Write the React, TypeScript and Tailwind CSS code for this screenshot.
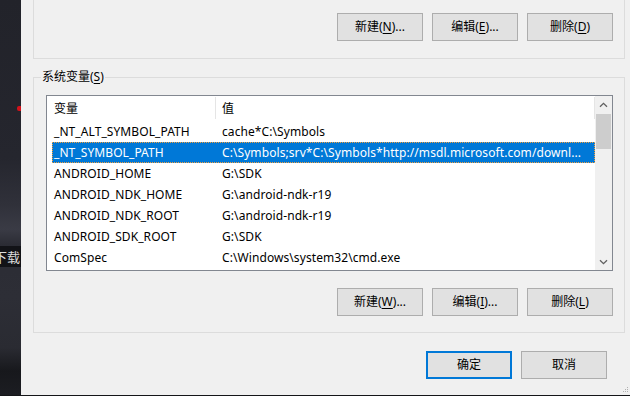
import React from "react";

const VARS: [string, string][] = [
  ["_NT_ALT_SYMBOL_PATH", "cache*C:\\Symbols"],
  ["_NT_SYMBOL_PATH", "C:\\Symbols;srv*C:\\Symbols*http://msdl.microsoft.com/downl..."],
  ["ANDROID_HOME", "G:\\SDK"],
  ["ANDROID_NDK_HOME", "G:\\android-ndk-r19"],
  ["ANDROID_NDK_ROOT", "G:\\android-ndk-r19"],
  ["ANDROID_SDK_ROOT", "G:\\SDK"],
  ["ComSpec", "C:\\Windows\\system32\\cmd.exe"],
];

function Btn({
  label,
  hotkey,
  tail = "",
  primary = false,
}: {
  label: string;
  hotkey?: string;
  tail?: string;
  primary?: boolean;
}) {
  return (
    <button
      className={
        primary
          ? "w-[86px] h-[28px] bg-[#e1e1e1] border-2 border-[#0078d7] flex items-center justify-center text-[12px] leading-none text-black"
          : "w-[86px] h-[28px] bg-[#e1e1e1] border border-[#adadad] flex items-center justify-center text-[12px] leading-none text-black"
      }
    >
      {label}
      {hotkey && (
        <>
          (<span className="underline underline-offset-[2px]">{hotkey}</span>)
        </>
      )}
      {tail}
    </button>
  );
}

function Chevron({ down = false }: { down?: boolean }) {
  return (
    <svg width="9" height="6" viewBox="0 0 9 6">
      <path
        d={down ? "M1 1.2 L4.5 4.7 L8 1.2" : "M1 4.8 L4.5 1.3 L8 4.8"}
        fill="none"
        stroke="#606060"
        strokeWidth="1.3"
      />
    </svg>
  );
}

function Strip() {
  return (
    <div className="w-[21px] shrink-0 flex flex-col overflow-hidden bg-[linear-gradient(180deg,#22232a_0%,#25262e_40%,#30313a_52%,#3a3b45_58%,#2b2c34_62%,#2d2e36_75%,#2a2b32_88%,#17181c_94%,#1c1d22_100%)]">
      <div className="h-[106px]" />
      <div className="flex justify-end">
        <div className="w-[4px] h-[5px] bg-[#d3121b] rounded-l-[2px]" />
      </div>
      <div className="h-[135px]" />
      <div className="h-[21px] bg-[#121317] flex items-center justify-end pr-[1px] overflow-hidden">
        <span className="whitespace-nowrap text-[13px] leading-none text-[#dcdcdc] font-['Noto_Sans_CJK_SC',sans-serif]">
          下载
        </span>
      </div>
    </div>
  );
}

function VarList() {
  return (
    <div className="ml-[12px] mt-[11px] w-[567px] h-[176px] border border-[#828790] bg-white flex">
      <div className="flex-1 flex flex-col tracking-[0.08px]">
        <div className="h-[25px] flex items-stretch">
          <div className="w-[169px] pl-[7px] pt-[2px] flex items-center border-r border-[#e5e5e5] mt-[1px] mb-[2px]">变量</div>
          <div className="flex-1 pl-[6px] pt-[2px] flex items-center border-r border-[#e5e5e5] mt-[1px] mb-[2px]">值</div>
        </div>
        {VARS.map(([name, value], i) => (
          <div
            key={name}
            className={
              i === 1
                ? "ml-[5px] h-[21px] flex items-center border border-dotted border-[#f0a040] bg-[#0078d7] text-white"
                : "ml-[5px] h-[21px] flex items-center border border-transparent"
            }
          >
            <div className="w-[168px] pl-[1px] whitespace-nowrap">{name}</div>
            <div className="flex-1 pl-[1px] whitespace-nowrap overflow-hidden">{value}</div>
          </div>
        ))}
      </div>
      <div className="w-[17px] bg-[#f0f0f0] flex flex-col">
        <div className="h-[17px] flex items-center justify-center">
          <Chevron />
        </div>
        <div className="mx-[1px] mt-[1px] h-[35px] bg-[#cdcdcd]" />
        <div className="flex-1" />
        <div className="h-[17px] flex items-center justify-center">
          <Chevron down />
        </div>
      </div>
    </div>
  );
}

export default function App() {
  return (
    <div className="w-[630px] h-[396px] flex flex-col bg-[#141518] overflow-hidden text-[12px] text-black font-['Noto_Sans','Noto_Sans_CJK_SC',sans-serif]">
      <div className="h-[395px] flex">
        <Strip />
        <div className="relative flex-1 bg-[#f0f0f0] flex flex-col pl-[12px] pr-[5px]">
          <div className="h-[59px] border-x border-b border-[#dcdcdc] flex justify-end items-start pt-[13px] pr-[11px] gap-[9px]">
            <Btn label="新建" hotkey="N" tail="..." />
            <Btn label="编辑" hotkey="E" tail="..." />
            <Btn label="删除" hotkey="D" />
          </div>

          <fieldset className="mt-[11px] border border-[#dcdcdc] pb-[16px]">
            <legend className="ml-[7px] px-[1px] leading-[14px]">
              系统变量(<span className="underline underline-offset-[2px]">S</span>)
            </legend>
            <VarList />
            <div className="mt-[17px] flex justify-end pr-[11px] gap-[9px]">
              <Btn label="新建" hotkey="W" tail="..." />
              <Btn label="编辑" hotkey="I" tail="..." />
              <Btn label="删除" hotkey="L" />
            </div>
          </fieldset>

          <div className="mt-[18px] flex justify-end pr-[18px] gap-[9px]">
            <Btn label="确定" primary />
            <Btn label="取消" />
          </div>

          <svg className="absolute right-[1px] bottom-[2px]" width="6" height="6" viewBox="0 0 6 6">
            <rect x="4" y="0" width="1" height="1" fill="#b0b0b0" />
            <rect x="2" y="2" width="1" height="1" fill="#b0b0b0" />
            <rect x="4" y="2" width="1" height="1" fill="#b0b0b0" />
            <rect x="0" y="4" width="1" height="1" fill="#b0b0b0" />
            <rect x="2" y="4" width="1" height="1" fill="#b0b0b0" />
            <rect x="4" y="4" width="1" height="1" fill="#b0b0b0" />
          </svg>
        </div>
      </div>
    </div>
  );
}
